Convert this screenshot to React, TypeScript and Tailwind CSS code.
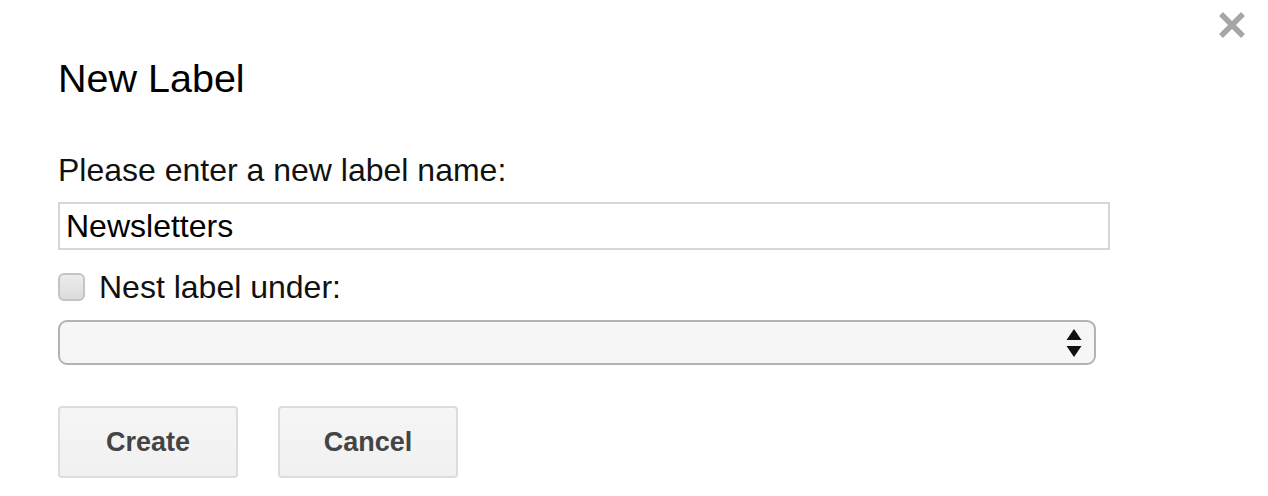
import React, { useState } from 'react';

const SelectArrows: React.FC = () => (
  <svg width="16" height="28" viewBox="0 0 16 28" className="shrink-0">
    <path d="M8 0 L15.5 11 L0.5 11 Z" fill="#111" />
    <path d="M0.5 17 L15.5 17 L8 28 Z" fill="#111" />
  </svg>
);

const CloseIcon: React.FC = () => (
  <svg width="32" height="30" viewBox="0 0 32 30">
    <path d="M5 4 L27 26 M27 4 L5 26" stroke="#a6a6a6" strokeWidth="5.5" strokeLinecap="butt" />
  </svg>
);

export default function App() {
  const [name, setName] = useState('Newsletters');
  const [nested, setNested] = useState(false);

  return (
    <div className="relative w-[1268px] h-[496px] overflow-hidden bg-white text-[#111] font-['Liberation_Sans',Arial,sans-serif]">
      {/* Close button */}
      <button className="absolute top-[10px] right-[20px] p-0">
        <CloseIcon />
      </button>

      <div className="flex flex-col pl-[58px] pt-[56px]">
        <h1 className="text-[39.5px] leading-[44px] text-black">New Label</h1>

        <label className="mt-[52px] text-[32px] leading-[36px]">Please enter a new label name:</label>

        <input
          value={name}
          onChange={e => setName(e.target.value)}
          className="mt-[14px] w-[1052px] h-[48px] border-2 border-[#d6d6d6] px-[6px] text-[32px] text-black outline-none"
        />

        {/* Nest checkbox */}
        <div className="mt-[19px] flex items-center h-[36px]">
          <button
            onClick={() => setNested(!nested)}
            className="w-[27px] h-[28px] rounded-[6px] border-2 border-[#c4c4c4] bg-gradient-to-b from-[#ececec] to-[#dcdcdc]"
          />
          <span className="ml-[14px] text-[32px] leading-[36px]">Nest label under:</span>
        </div>

        {/* Parent label select */}
        <div className="mt-[15px] w-[1038px] h-[45px] flex items-center justify-end pr-[12px] rounded-[9px] border-2 border-[#b3b3b3] bg-[#f6f6f6]">
          <SelectArrows />
        </div>

        {/* Actions */}
        <div className="mt-[41px] flex gap-[40px]">
          <button className="w-[180px] h-[72px] rounded-[4px] border-2 border-[#dcdcdc] bg-gradient-to-b from-[#f5f5f5] to-[#f1f1f1] text-[27px] font-bold text-[#444]">
            Create
          </button>
          <button className="w-[180px] h-[72px] rounded-[4px] border-2 border-[#dcdcdc] bg-gradient-to-b from-[#f5f5f5] to-[#f1f1f1] text-[27px] font-bold text-[#444]">
            Cancel
          </button>
        </div>
      </div>
    </div>
  );
}
